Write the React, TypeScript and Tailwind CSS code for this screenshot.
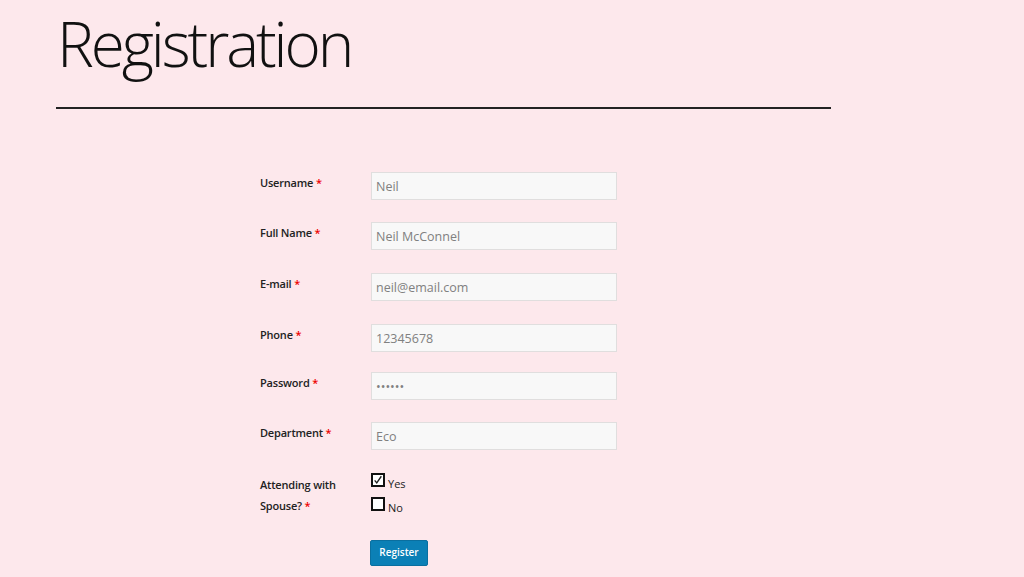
import { useState } from "react";

const fields = [
  { label: "Username", value: "Neil", mt: "mt-[63px]" },
  { label: "Full Name", value: "Neil McConnel", mt: "mt-[22px]" },
  { label: "E-mail", value: "neil@email.com", mt: "mt-[23px]" },
  { label: "Phone", value: "12345678", mt: "mt-[23px]" },
  { label: "Password", value: "••••••", mt: "mt-[20px]" },
  { label: "Department", value: "Eco", mt: "mt-[22px]" },
];

export default function App() {
  const [spouse, setSpouse] = useState<"yes" | "no">("yes");

  const Check = () => (
    <svg viewBox="0 0 12 12" className="h-[10px] w-[10px]">
      <path d="M2 6.5 L4.5 9.5 L10 1.5" fill="none" stroke="#222" strokeWidth="1.6" />
    </svg>
  );

  return (
    <div className="min-h-[577px] w-full bg-[#fde8ec] font-['Open_Sans',sans-serif] text-[#222]">
      {/* Header */}
      <div className="pl-[56px]">
        <h1 className="pl-[1px] pt-[3px] text-[62px] font-light leading-[80px] tracking-[-3.1px] text-[#111]">
          Registration
        </h1>
        <div className="mt-[24px] h-[2px] w-[775px] bg-[#222]" />
      </div>

      {/* Form */}
      <div className="pl-[260px]">
        {fields.map((f) => (
          <div key={f.label} className={`flex ${f.mt}`}>
            <label className="w-[111px] pt-[3px] text-[11px] font-semibold tracking-[-0.2px] text-[#222]">
              {f.label} <span className="text-[#e00]">*</span>
            </label>
            <input
              type="text"
              defaultValue={f.value}
              className="h-[28px] w-[246px] border border-[#e0dede] bg-[#f8f8f8] px-[4px] text-[12.5px] text-[#808080] outline-none"
            />
          </div>
        ))}

        <div className="mt-[21px] flex">
          <div className="w-[111px] pt-[3px] text-[11px] font-semibold leading-[21px] tracking-[-0.2px] text-[#222]">
            Attending with
            <br />
            Spouse? <span className="text-[#e00]">*</span>
          </div>
          <div className="flex flex-col gap-[10px] pt-[2px]">
            <label className="flex items-end gap-[3px] text-[11px] leading-none text-[#222]" onClick={() => setSpouse("yes")}>
              <span className="flex h-[14px] w-[14px] items-center justify-center border-2 border-[#111] bg-white">
                {spouse === "yes" && <Check />}
              </span>
              <span className="-mb-[2px]">Yes</span>
            </label>
            <label className="flex items-end gap-[3px] text-[11px] leading-none text-[#222]" onClick={() => setSpouse("no")}>
              <span className="flex h-[14px] w-[14px] items-center justify-center border-2 border-[#111] bg-white">
                {spouse === "no" && <Check />}
              </span>
              <span className="-mb-[2px]">No</span>
            </label>
          </div>
        </div>

        <div className="mt-[22px] pl-[110px]">
          <button className="h-[26px] w-[58px] rounded-[2px] border border-[#0a6f9f] bg-[#0b80b6] text-[10px] font-semibold text-white">
            Register
          </button>
        </div>
      </div>
    </div>
  );
}
